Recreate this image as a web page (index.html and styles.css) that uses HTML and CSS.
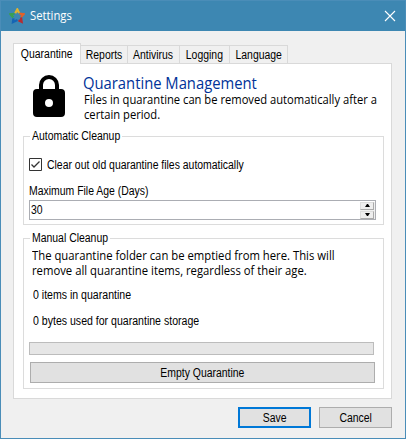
FILE: index.html
```html
<!DOCTYPE html>
<html lang="en">
<head>
<meta charset="utf-8">
<title>Settings</title>
<link rel="stylesheet" href="styles.css">
</head>
<body>
<div class="window">
  <header class="titlebar">
    <svg class="logo" width="16" height="16" viewBox="0 0 16 16">
      <g fill="none" stroke-width="2.3">
        <path d="M6.200 5.200 8.300 1.500 10.200 5" stroke="#dfb431"/>
        <path d="M10.500 5.700 14.500 6.300 12 9" stroke="#e0622a"/>
        <path d="M12 9.500 12.600 13.800 9.500 12.200" stroke="#b72c30"/>
        <path d="M8.500 12 4 14 4.500 10.300" stroke="#1565b5"/>
        <path d="M4.300 9.500 1.600 6.300 5.500 5.800" stroke="#39a052"/>
      </g>
    </svg>
    <span class="caption">Settings</span>
    <svg class="close" width="12" height="12" viewBox="0 0 12 12"><path d="M1 1 11 11M11 1 1 11" stroke="#fff" stroke-width="1.1"/></svg>
  </header>
  <nav class="tabs">
    <div class="tab active"><span>Quarantine</span></div>
    <div class="tab reports"><span>Reports</span></div>
    <div class="tab antivirus"><span>Antivirus</span></div>
    <div class="tab logging"><span>Logging</span></div>
    <div class="tab language"><span>Language</span></div>
  </nav>
  <main class="panel">
    <section class="intro">
      <svg width="32" height="42" viewBox="0 0 32 42"><path fill="#000" fill-rule="evenodd" d="M4 14H6V10a10 10 0 0 1 20 0V14H28a4 4 0 0 1 4 4V38a4 4 0 0 1-4 4H4a4 4 0 0 1-4-4V18a4 4 0 0 1 4-4ZM10 14H22V10a6 6 0 0 0-12 0ZM16 24a4 4 0 1 0 0 8 4 4 0 0 0 0-8Z"/></svg>
      <div>
        <h1>Quarantine Management</h1>
        <p class="prose">Files in quarantine can be removed automatically after a<br>certain period.</p>
      </div>
    </section>
    <section class="group auto">
      <h2><span>Automatic Cleanup</span></h2>
      <div class="check">
        <svg width="13" height="13" viewBox="0 0 13 13"><path d="M.5.5H12.500V12.500H.5Z" fill="#fff" stroke="#333"/><path d="M2.500 6.500 5 9 10.500 3.500" fill="none" stroke="#333" stroke-width="1.300"/></svg>
        <span class="ui">Clear out old quarantine files automatically</span>
      </div>
      <div class="label"><span class="ui">Maximum File Age (Days)</span></div>
      <div class="number">
        <span class="ui">30</span>
        <div class="spinner">
          <i><svg width="5" height="3"><path d="M0 3 2 0H3L5 3Z"/></svg></i>
          <i><svg width="5" height="3"><path d="M0 0H5L3 3H2Z"/></svg></i>
        </div>
      </div>
    </section>
    <section class="group manual">
      <h2><span>Manual Cleanup</span></h2>
      <p class="prose">The quarantine folder can be emptied from here. This will<br>remove all quarantine items, regardless of their age.</p>
      <div class="stat"><span class="ui">0 items in quarantine</span></div>
      <div class="stat"><span class="ui">0 bytes used for quarantine storage</span></div>
      <div class="progress"></div>
      <div class="button empty"><span>Empty Quarantine</span></div>
    </section>
  </main>
  <footer>
    <div class="button save"><span>Save</span></div>
    <div class="button"><span>Cancel</span></div>
  </footer>
</div>
</body>
</html>
```
FILE: styles.css
```css
* { box-sizing: border-box; margin: 0; padding: 0; }
body { width: 406px; height: 439px; overflow: hidden; }
svg { display: block; flex: none; }
.window {
  width: 406px; height: 439px;
  border: 1px solid #4a8db8; background: #f0f0f0; color: #000;
  font: 12px/14px "Liberation Sans", Arial, sans-serif;
}
.titlebar {
  height: 30px; display: flex; align-items: center;
  background: #3d87b2; color: #fff; padding: 0 9px 0 8px;
}
.caption {
  flex: 1; margin-left: 5px;
  font: 12px/16px "Open Sans", sans-serif;
  transform: scaleX(.94); transform-origin: left;
}
.tabs { display: flex; align-items: flex-end; height: 32px; padding-left: 12px; }
.tab {
  height: 18px; display: flex; justify-content: center; align-items: center;
  border: 1px solid #d9d9d9; border-left: 0; border-bottom: 0; padding-top: 1px;
}
.tab span, .button span { white-space: nowrap; transform: scaleX(.87); }
.tab.active {
  width: 68px; height: 21px; margin-bottom: -1px; z-index: 1;
  border-left: 1px solid #d9d9d9; background: #fff; padding-bottom: 1px;
}
.reports { width: 47px; }
.antivirus { width: 52px; }
.logging { width: 50px; }
.language { width: 58px; }
.panel {
  margin-left: 12px; width: 379px; height: 336px;
  border: 1px solid #d9d9d9; background: #fff; padding: 11px 7px 0 9px;
}
.intro { display: flex; gap: 18px; height: 60px; padding-left: 10px; }
h1 {
  font: 400 17px/20px "Open Sans", sans-serif; color: #003399;
  white-space: nowrap; transform: scaleX(.87); transform-origin: left;
  margin: -2px 0 -1px;
}
.prose {
  font: 13px/15px "Open Sans", sans-serif;
  white-space: nowrap; transform: scaleX(.869); transform-origin: left;
}
.intro .prose { margin-left: 1px; transform: scaleX(.861); }
.ui { white-space: nowrap; transform: scaleX(.87); transform-origin: left; display: block; }
.group { width: 361px; border: 1px solid #dcdcdc; padding: 0 7px 0 5px; }
.group h2 { font: inherit; width: 92px; height: 14px; margin: -8px 0 0 1px; padding-left: 2px; background: #fff; white-space: nowrap; }
.group h2 span { display: block; transform: scaleX(.87); transform-origin: left; }
.auto { height: 89px; margin-top: 1px; }
.manual { height: 151px; margin-top: 13px; }
.manual h2 { width: 80px; }
.check { display: flex; align-items: center; gap: 5px; height: 13px; margin-top: 15px; }
.label { margin: 13px 0 0; height: 16px; }
.number {
  width: 347px; height: 20px; border: 1px solid #abadb3;
  padding: 0 0 0 1px; display: flex; justify-content: space-between; align-items: center;
}
.number .ui { margin-top: -1px; }
.spinner { width: 15px; height: 17px; display: flex; flex-direction: column; gap: 1px; background: #f0f0f0; padding-right: 1px; }
.spinner i {
  height: 8px; border: 1px solid #aaa; border-top-color: #ddd; border-left-color: #ddd;
  background: #eee; display: flex; align-items: center; justify-content: center;
}
.manual .prose { margin: 3px 0 0 3px; height: 40px; }
.stat { height: 26px; padding-left: 4px; }
.stat .ui { transform: scaleX(.88); }
.progress { width: 345px; height: 13px; border: 1px solid #bcbcbc; background: #e6e6e6; margin-top: 2px; }
.button {
  width: 73px; height: 21px; border: 1px solid #adadad; background: #e1e1e1;
  display: flex; align-items: center; justify-content: center;
}
.empty { width: 345px; margin: 7px 0 0 1px; }
.save { border: 2px solid #0078d7; }
footer { display: flex; gap: 8px; justify-content: flex-end; padding: 8px 13px 0 0; }
```
